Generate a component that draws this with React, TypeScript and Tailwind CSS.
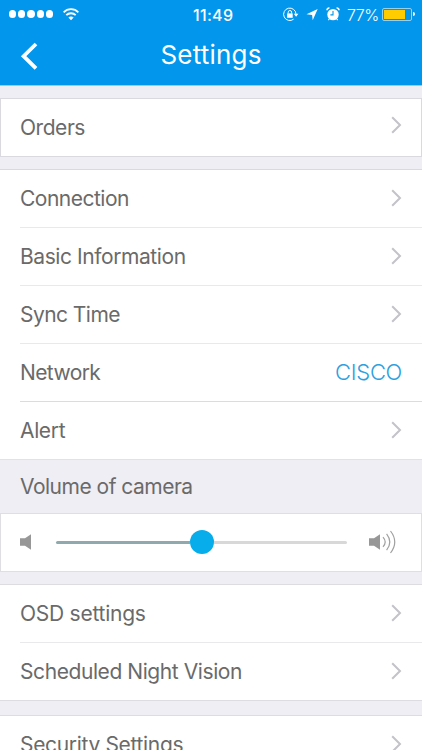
import React from 'react';

const Chevron = ({ className = '' }: { className?: string }) => (
  <svg className={`h-[18px] w-[11px] shrink-0 ${className}`} viewBox="0 0 11 18" fill="none" stroke="#c3c3c8" strokeWidth="2">
    <path d="M1.2 1.2 L9 9 L1.2 16.8" />
  </svg>
);

const StatusBar = () => (
  <div className="flex h-7 items-center pl-[9px] pr-[7px] text-white">
    <div className="flex gap-[2px]">
      {[0, 1, 2, 3, 4].map((i) => (
        <span key={i} className="size-[7.2px] rounded-full bg-white" />
      ))}
    </div>
    <svg className="ml-[10px] h-[13px] w-4" viewBox="0 0 16 13" fill="none" stroke="white" strokeWidth="1.8">
      <path d="M0.6 4.4 C4.6 0.1 11.4 0.1 15.4 4.4" />
      <path d="M3.3 7.2 C5.8 4.6 10.2 4.6 12.7 7.2" />
      <path d="M8 12.3 L5.4 9.6 C6.8 8.2 9.2 8.2 10.6 9.6 Z" fill="white" stroke="none" />
    </svg>
    <span className="ml-[114px] w-[60px] whitespace-nowrap pt-px text-[16px] font-medium tracking-[0.35px]">11:49</span>
    <div className="ml-auto flex items-center">
      {/* Rotation lock */}
      <svg className="h-[15px] w-[16px]" viewBox="0 0 16 15" fill="none" stroke="white" strokeWidth="1">
        <path d="M10.6 12.2 A6.2 6.2 0 1 1 13 7.2" />
        <path d="M10.8 6.7 H15.4 L13.1 9.8 Z" fill="white" stroke="none" />
        <rect x="4.1" y="6.4" width="5.6" height="4.4" fill="white" stroke="none" />
        <path d="M5.2 6.6 V5.2 A1.7 1.7 0 0 1 8.6 5.2 V6.6" />
      </svg>
      <svg className="ml-[7px] h-[13px] w-3" viewBox="0 0 12 13" fill="white">
        <path d="M11.7 1 L6.7 12.3 L6.1 6.9 L0.5 6.2 Z" />
      </svg>
      {/* Alarm */}
      <svg className="ml-[8px] h-[14px] w-[14px]" viewBox="0 0 14 14" fill="none">
        <circle cx="7" cy="7.6" r="5.7" fill="white" />
        <path d="M1 3.2 A2 2 0 0 1 3.4 1.1 M13 3.2 A2 2 0 0 0 10.6 1.1" stroke="white" strokeWidth="1.6" />
        <path d="M3.2 12 L2.4 13.2 M10.8 12 L11.6 13.2" stroke="white" strokeWidth="1.2" />
        <path d="M7 4 V7.9 H4.4" stroke="#0296ec" strokeWidth="1.1" />
      </svg>
      <span className="ml-[7px] w-[35px] whitespace-nowrap pt-px text-[16px] font-light tracking-[-0.45px]">77%</span>
      <div className="flex h-[13px] w-[30px] rounded-[2px] border border-[#8fd1f8] bg-[#1c8fcb] p-px">
        <div className="w-[21px] bg-[#ffcc00]" />
        <div className="flex-1 bg-[#0296ec]" />
      </div>
      <span className="ml-px h-[4px] w-[2px] rounded-r-full bg-white" />
    </div>
  </div>
);

type RowProps = { label: string; tracking: string; value?: string; line?: string };

const Row = ({ label, tracking, value, line }: RowProps) => (
  <div className={`shrink-0 pl-5 ${line ? 'h-[58px]' : 'h-[57px]'}`}>
    <div className={`flex h-full items-center justify-between pr-5 ${line ? `border-b ${line}` : ''}`}>
      <span className={`whitespace-nowrap ${tracking}`}>{label}</span>
      {value ? (
        <span className="text-[22px] font-light tracking-[-0.3px] text-[#2ea0df]">{value}</span>
      ) : (
        <Chevron className="mb-[2px]" />
      )}
    </div>
  </div>
);

const App = () => {
  const line = 'border-[#e9e9ec]';
  return (
    <div className="flex h-[750px] w-[422px] flex-col overflow-hidden bg-[#efeef4] font-['Inter',sans-serif] text-[21px] font-normal text-[#6a6a6a]">
      {/* Header */}
      <header className="h-[86px] shrink-0 border-b border-[#8bcffa] bg-[#0296ec]">
        <StatusBar />
        <div className="grid h-[54px] grid-cols-[60px_1fr_60px] items-center text-white">
          <svg className="ml-[20px] mt-[2px] h-7 w-[18px]" viewBox="0 0 18 28" fill="none" stroke="white" strokeWidth="3.8">
            <path d="M16 2 L3.6 14.2 L16 26.4" />
          </svg>
          <h1 className="pb-px text-center text-[26px] font-normal tracking-[0.2px]">Settings</h1>
        </div>
      </header>

      <section className="mt-3 flex h-[59px] shrink-0 items-center justify-between border border-[#d9d9df] bg-white pl-[19px] pr-[19px]">
        <span className="tracking-[-0.45px]">Orders</span>
        <Chevron className="mb-[5px]" />
      </section>

      <section className="mt-3 shrink-0 border-t border-[#d9d9df] bg-white">
        <Row label="Connection" tracking="tracking-[-0.5px]" line={line} />
        <Row label="Basic Information" tracking="tracking-[-0.42px]" line={line} />
        <Row label="Sync Time" tracking="tracking-[-0.55px]" line={line} />
        <Row label="Network" tracking="tracking-[-0.6px]" value="CISCO" line="border-[#dcdcdf]" />
        <Row label="Alert" tracking="tracking-[-0.35px]" />
      </section>

      <h2 className="flex h-[54px] shrink-0 items-center border-t border-[#e2e2e6] pl-5 tracking-[-0.5px]">Volume of camera</h2>

      {/* Volume */}
      <section className="flex h-[59px] shrink-0 items-center border border-[#dedee3] bg-white pb-px pl-[19px] pr-[25px]">
        <svg className="h-4 w-3" viewBox="0 0 12 16" fill="#979797">
          <path d="M0 4.3 H5 L11 0.2 V15.8 L5 11.7 H0 Z" />
        </svg>
        <div className="ml-[24px] flex w-[291px] items-center">
          <div className="h-[3px] w-[134px] rounded-l-full bg-[#8fa9ad]" />
          <div className="size-6 shrink-0 rounded-full bg-[#07adeb]" />
          <div className="h-[3px] flex-1 rounded-r-full bg-[#d8d8d8]" />
        </div>
        <svg className="ml-auto h-6 w-[27px]" viewBox="0 0 27 24" fill="none" stroke="#a0a0a0" strokeWidth="1.2">
          <path d="M0 8.3 H5 L11 4.2 V19.8 L5 15.7 H0 Z" fill="#979797" stroke="none" />
          <path d="M14 7.2 Q18.4 12 14 16.8 M17.6 3.8 Q24 12 17.6 20.2 M21.5 1 Q30 12 21.5 23" />
        </svg>
      </section>

      <section className="mt-3 shrink-0 border-y border-[#dcdce1] bg-white">
        <Row label="OSD settings" tracking="tracking-[-0.25px]" line={line} />
        <Row label="Scheduled Night Vision" tracking="tracking-[-0.42px]" />
      </section>

      <section className="mt-[14px] shrink-0 border-t border-[#dcdce1] bg-white">
        <Row label="Security Settings" tracking="tracking-[-0.33px]" />
      </section>
    </div>
  );
};

export default App;
